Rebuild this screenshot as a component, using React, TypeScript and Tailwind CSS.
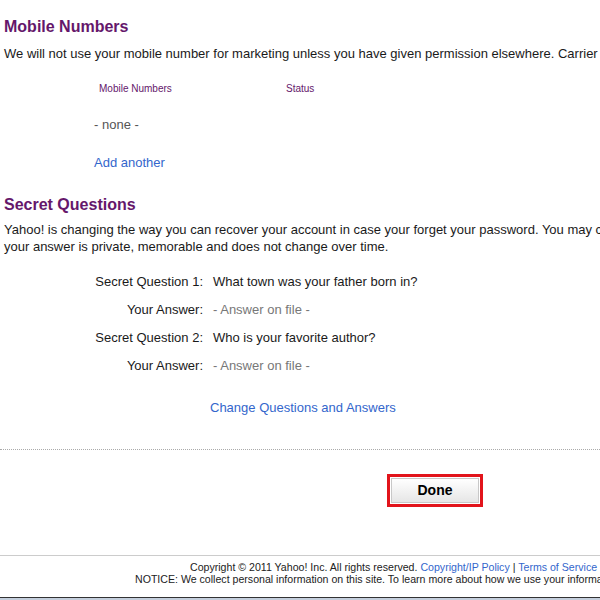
export default function App() {
  const questions = [
    { label: "Secret Question 1:", value: "What town was your father born in?", answer: false },
    { label: "Your Answer:", value: "- Answer on file -", answer: true },
    { label: "Secret Question 2:", value: "Who is your favorite author?", answer: false },
    { label: "Your Answer:", value: "- Answer on file -", answer: true },
  ]

  return (
    <div className="h-[600px] w-[600px] overflow-hidden bg-white flex flex-col font-['Liberation_Sans',Arial,sans-serif] text-[#1a1a1a]">
      {/* Mobile numbers */}
      <h2 className="mt-[17px] pl-1 text-[16px] leading-5 font-bold text-[#65176b]">Mobile Numbers</h2>
      <p className="mt-2 pl-1 text-[13px] leading-[17px] whitespace-nowrap">
        We will not use your mobile number for marketing unless you have given permission elsewhere. Carrier charges may apply.
      </p>
      <div className="mt-5 ml-[94px] flex text-[10px] leading-[14px] text-[#65176b]">
        <span className="pl-[5px] w-[192px]">Mobile Numbers</span>
        <span>Status</span>
      </div>
      <div className="mt-[21px] ml-[94px] text-[13px] leading-4 text-[#555]">- none -</div>
      <a href="#" className="mt-[21px] ml-[94px] w-fit text-[13px] leading-[17px] text-[#3366cc]">Add another</a>

      {/* Secret questions */}
      <h2 className="mt-[24px] pl-1 text-[16px] leading-5 font-bold text-[#65176b]">Secret Questions</h2>
      <div className="mt-[6px] pl-1 text-[13px] leading-[17px] whitespace-nowrap">
        <p>Yahoo! is changing the way you can recover your account in case your forget your password. You may change your questions at any time. Make sure</p>
        <p>your answer is private, memorable and does not change over time.</p>
      </div>
      <div className="mt-[13px] grid grid-cols-[203px_1fr] gap-x-[10px] text-[13px] leading-[28px]">
        {questions.map((q, i) => (
          <div key={i} className="contents">
            <span className="text-right">{q.label}</span>
            <span className={q.answer ? "text-[#777]" : ""}>{q.value}</span>
          </div>
        ))}
      </div>
      <a href="#" className="mt-[19px] ml-[210px] w-fit text-[13px] leading-[17px] text-[#3366cc]">Change Questions and Answers</a>

      <div className="mt-[33px] border-t border-dotted border-[#aaa]" />

      {/* Done */}
      <div className="mt-[24px] ml-[387px] w-[96px] h-[33px] border-[3px] border-[#e2141b] p-[1px]">
        <button className="w-full h-full border border-[#c8c8c8] bg-gradient-to-b from-white to-[#e6e6e6] text-[14px] font-bold text-black">
          Done
        </button>
      </div>

      {/* Footer */}
      <div className="mt-[48px] border-t border-[#ccc]" />
      <div className="pt-[5px] text-[10.6px] leading-3 text-[#222] whitespace-nowrap">
        <p className="pl-[190px]">
          Copyright © 2011 Yahoo! Inc. All rights reserved. <a href="#" className="text-[#3366cc]">Copyright/IP Policy</a> |{" "}
          <a href="#" className="text-[#3366cc]">Terms of Service</a> | <a href="#" className="text-[#3366cc]">Send Feedback</a>
        </p>
        <p className="pl-[135px]">
          NOTICE: We collect personal information on this site. To learn more about how we use your information, see our Privacy Policy
        </p>
      </div>

      <div className="mt-auto h-[3px] border-t border-[#333] bg-[#c4cedc]" />
    </div>
  )
}
